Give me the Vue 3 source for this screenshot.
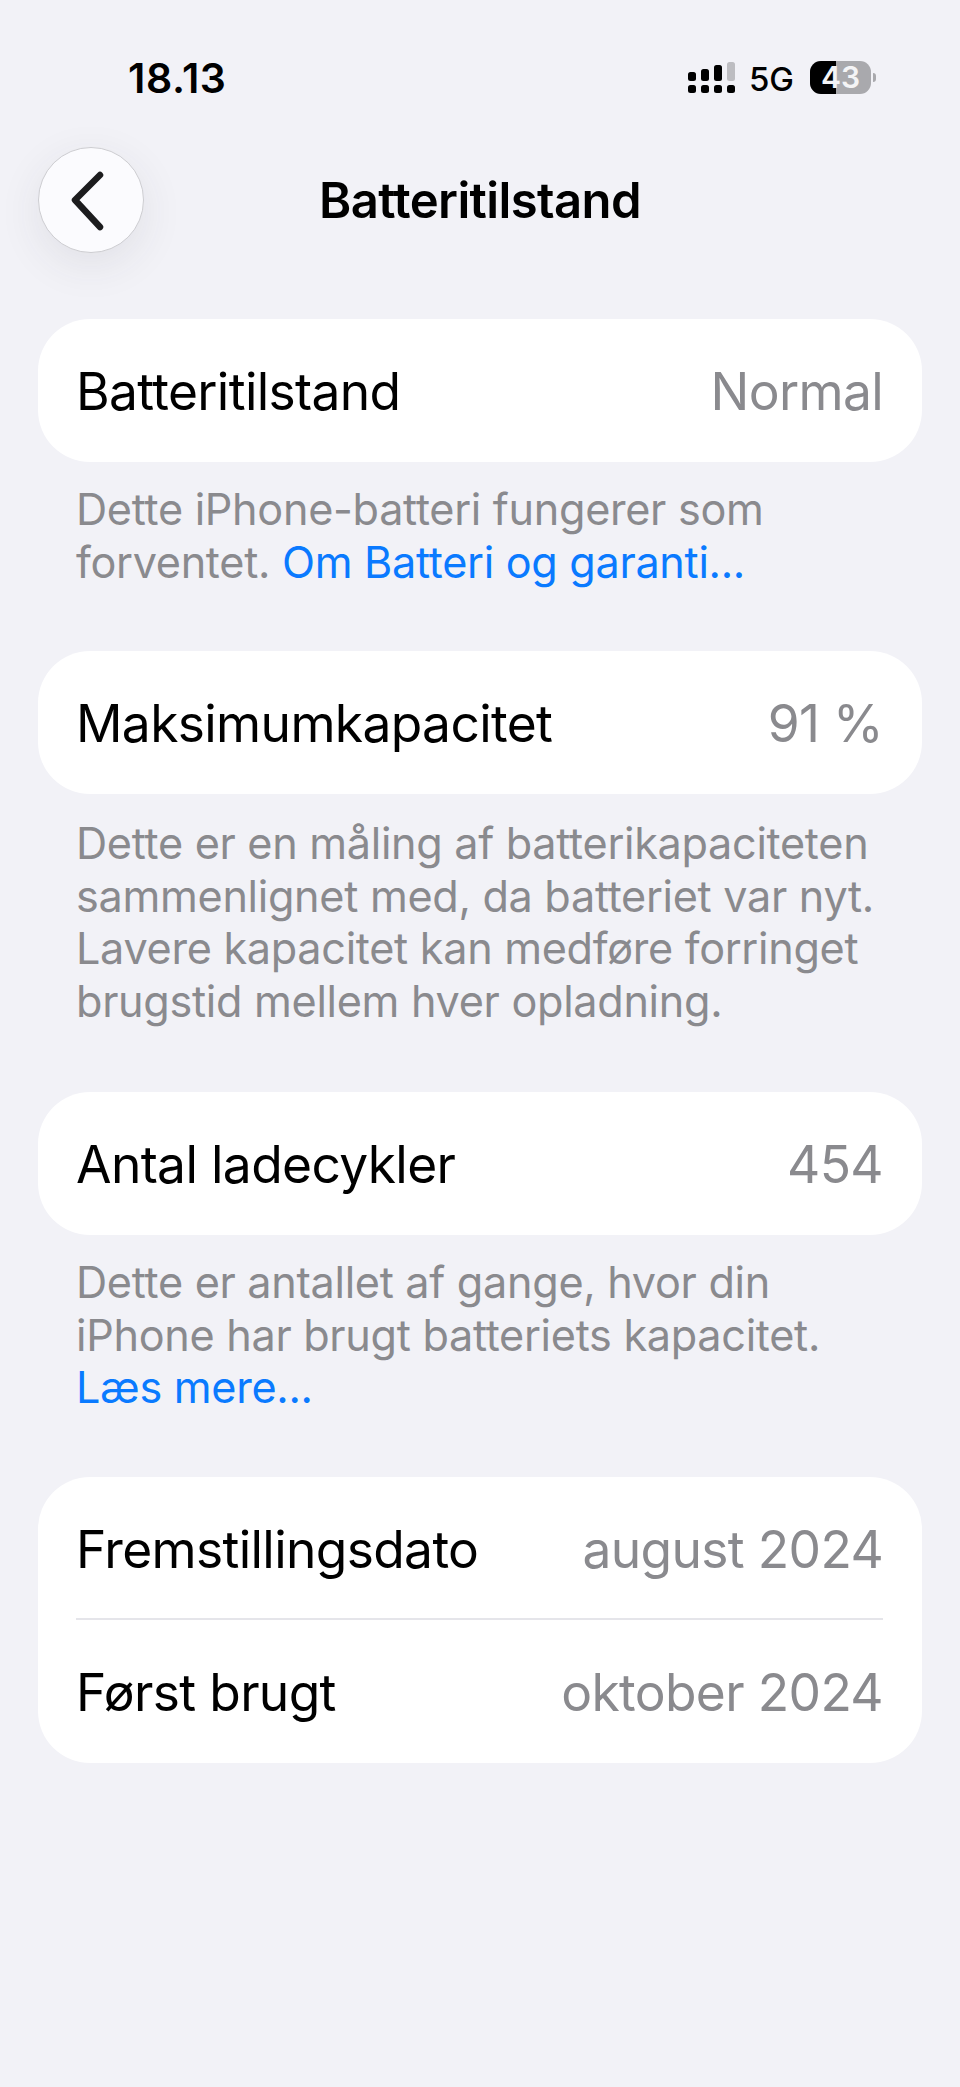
<script setup>
const sections = [
  {
    rows: [{ label: 'Batteritilstand', value: 'Normal' }],
    lines: ['Dette iPhone-batteri fungerer som'],
    tail: 'forventet. ',
    link: 'Om Batteri og garanti...'
  },
  {
    rows: [{ label: 'Maksimumkapacitet', value: '91 %' }],
    lines: [
      'Dette er en måling af batterikapaciteten',
      'sammenlignet med, da batteriet var nyt.',
      'Lavere kapacitet kan medføre forringet',
      'brugstid mellem hver opladning.'
    ],
    long: true
  },
  {
    rows: [{ label: 'Antal ladecykler', value: '454' }],
    lines: ['Dette er antallet af gange, hvor din', 'iPhone har brugt batteriets kapacitet.'],
    tail: '',
    link: 'Læs mere...'
  },
  {
    rows: [
      { label: 'Fremstillingsdato', value: 'august 2024' },
      { label: 'Først brugt', value: 'oktober 2024' }
    ],
    lines: []
  }
]

const bars = [
  { x: 0, y: 10, h: 9, fill: '#000' },
  { x: 13, y: 7, h: 12, fill: '#000' },
  { x: 26, y: 3, h: 16, fill: '#000' },
  { x: 39, y: 0, h: 19, fill: '#bdbdc1' }
]
const dots = [0, 13, 26, 39]
</script>

<template>
  <div class="screen">
    <div class="status">
      <span class="time">18.13</span>
      <div class="status-right">
        <svg class="signal" width="47" height="31" viewBox="0 0 47 31">
          <rect v-for="b in bars" :key="b.x" :x="b.x" :y="b.y" width="8" :height="b.h" rx="2.5" :fill="b.fill" />
          <rect v-for="d in dots" :key="d" :x="d" y="23" width="8" height="8" rx="2.5" fill="#000" />
        </svg>
        <span class="net">5G</span>
        <div class="battery">
          <div class="battery-fill"></div>
          <span class="battery-text">43</span>
        </div>
        <span class="battery-nub"></span>
      </div>
    </div>

    <div class="nav">
      <button class="back">
        <svg width="44" height="64" viewBox="0 0 44 64">
          <path d="M33 7 L8 32 L33 59" fill="none" stroke="#1c1c1e" stroke-width="6.5" stroke-linecap="round" stroke-linejoin="round" />
        </svg>
      </button>
      <div class="title">Batteritilstand</div>
      <div class="nav-spacer"></div>
    </div>

    <div class="content">
      <section v-for="(s, i) in sections" :key="i" class="section">
        <div class="card">
          <div v-for="r in s.rows" :key="r.label" class="row">
            <span class="label">{{ r.label }}</span>
            <span class="value">{{ r.value }}</span>
          </div>
        </div>
        <p v-if="s.lines.length" :class="['note', { long: s.long }]">
          <template v-for="l in s.lines" :key="l">{{ l }}<br /></template>
          <template v-if="s.link">{{ s.tail }}<a class="link">{{ s.link }}</a></template>
        </p>
      </section>
    </div>
  </div>
</template>

<style scoped>
.screen {
  width: 960px;
  height: 2087px;
  background: #f2f2f7;
  font-family: Inter, "Liberation Sans", sans-serif;
  overflow: hidden;
}

.status {
  height: 147px;
  display: flex;
  justify-content: space-between;
  box-sizing: border-box;
  padding: 55px 84px 0 128px;
}

.time {
  font-size: 41px;
  line-height: 46px;
  font-weight: 600;
  color: #000;
  letter-spacing: 0.6px;
}

.status-right {
  display: flex;
  align-items: flex-start;
  height: 46px;
}

.signal {
  margin: 7px 14px 0 0;
}

.net {
  font-size: 33px;
  line-height: 40px;
  margin: 4px 16px 0 0;
  font-weight: 500;
  color: #000;
}

.battery {
  position: relative;
  width: 61px;
  height: 33px;
  margin-top: 6px;
  border-radius: 11px;
  background: #a9a9ad;
}

.battery-fill {
  width: 26px;
  height: 100%;
  border-radius: 11px 0 0 11px;
  background: #000;
}

.battery-text {
  position: absolute;
  top: -3px;
  left: 0;
  right: 0;
  text-align: center;
  font-size: 30px;
  line-height: 39px;
  font-weight: 600;
  color: #f4f4f6;
}

.battery-nub {
  width: 3px;
  height: 9px;
  margin: 18px 0 0 2px;
  border-radius: 0 3px 3px 0;
  background: #a9a9ad;
}

.nav {
  display: flex;
  align-items: center;
  padding: 0 38px;
  height: 106px;
}

.back {
  width: 106px;
  height: 106px;
  flex: none;
  display: flex;
  align-items: center;
  justify-content: center;
  padding: 0 4px 0 0;
  border: 1px solid #cdcdd1;
  border-radius: 50%;
  background: #fbfbfe;
  box-shadow: 0 12px 44px rgba(60, 60, 70, 0.09);
}

.title {
  flex: 1;
  text-align: center;
  font-size: 49px;
  font-weight: 600;
  color: #000;
  letter-spacing: -0.6px;
}

.nav-spacer {
  width: 106px;
  flex: none;
}

.content {
  padding: 66px 38px 0;
}

.section {
  margin-bottom: 63px;
}

.card {
  background: #fff;
  border-radius: 52px;
  padding: 0 39px 0 38px;
}

.row {
  position: relative;
  box-sizing: border-box;
  height: 143px;
  padding-top: 1px;
  display: flex;
  align-items: center;
  justify-content: space-between;
  font-size: 51.5px;
  letter-spacing: -0.65px;
}

.row + .row::before {
  content: "";
  position: absolute;
  top: -2px;
  left: 0;
  right: 0;
  height: 2px;
  background: #e5e5ea;
}

.label {
  color: #000;
}

.value {
  color: #8a8a8e;
}

.note {
  margin: 21px 0 0;
  padding: 0 39px 0 38px;
  font-size: 43.2px;
  line-height: 52.5px;
  color: #8a8a8e;
  white-space: nowrap;
  letter-spacing: -0.3px;
}

.note.long {
  margin-top: 23px;
  padding-bottom: 2px;
}

.link {
  color: #0a7aff;
}
</style>

<style>
html, body {
  background: #f2f2f7;
}
</style>
